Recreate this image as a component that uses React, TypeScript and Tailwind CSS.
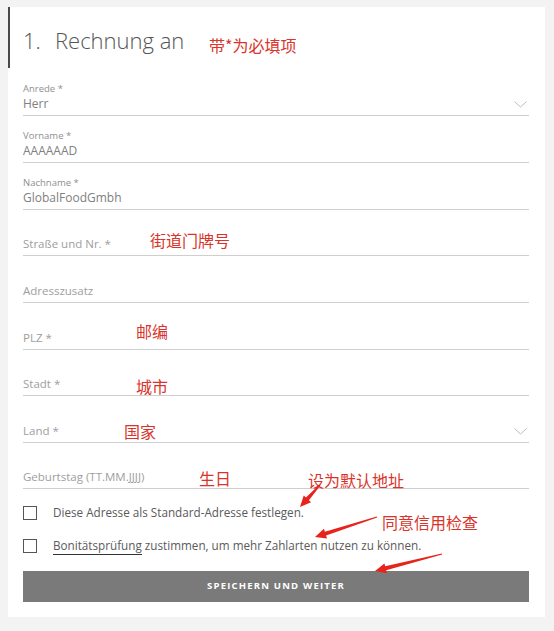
import React from 'react';

const font = { fontFamily: '"Open Sans", "Liberation Sans", sans-serif' };
const cjk = { fontFamily: '"Noto Sans CJK SC", "Noto Sans", sans-serif' };

type FieldProps = {
  label: string;
  value?: string;
  h: string;
  select?: boolean;
};

function Chevron() {
  return (
    <svg width="13" height="7" viewBox="0 0 13 7" className="absolute right-[2px] bottom-[7px]">
      <path d="M0.5 0.5 L6.5 6 L12.5 0.5" fill="none" stroke="#bdbdbd" strokeWidth="1" />
    </svg>
  );
}

function Field({ label, value, h, select }: FieldProps) {
  return (
    <div className={`relative flex flex-col justify-end border-b border-[#cfcfcf] pb-[4px] ${h}`}>
      {value ? (
        <>
          <div className="text-[9.5px] leading-[12px] text-[#8f8f8f] mb-[2px]">{label}</div>
          <div className="text-[12px] leading-[14px] text-[#808080]">{value}</div>
        </>
      ) : (
        <div className="text-[11.5px] leading-[14px] text-[#9e9e9e]">{label}</div>
      )}
      {select && <Chevron />}
    </div>
  );
}

function Note({ text, className }: { text: string; className: string }) {
  return (
    <div className={`absolute text-[#d9342b] text-[16px] leading-[20px] whitespace-nowrap ${className}`} style={cjk}>
      {text}
    </div>
  );
}

function Arrow({ x1, y1, x2, y2 }: { x1: number; y1: number; x2: number; y2: number }) {
  const dx = x2 - x1;
  const dy = y2 - y1;
  const len = Math.sqrt(dx * dx + dy * dy);
  const ux = dx / len;
  const uy = dy / len;
  const px = -uy;
  const py = ux;
  const hl = 11;
  const hw = 5;
  const bx = x2 - ux * hl;
  const by = y2 - uy * hl;
  const tail = `${x1 + px * 0.6},${y1 + py * 0.6} ${x1 - px * 0.6},${y1 - py * 0.6}`;
  const pts = `${tail} ${bx - px * 2},${by - py * 2} ${bx - px * hw},${by - py * hw} ${x2},${y2} ${bx + px * hw},${by + py * hw} ${bx + px * 2},${by + py * 2}`;
  return <polygon points={pts} fill="#e8231b" />;
}

export default function App() {
  return (
    <div className="w-[554px] h-[631px] bg-[#f3f3f3] pt-[7px] pl-[8px]" style={font}>
      <div className="relative w-[537px] h-[610px] bg-white pl-[15px] pr-[16px]">
        <div className="absolute left-0 top-0 w-[2px] h-[61px] bg-[#4a4a4a]" />
        <div className="h-[62px] flex items-center pt-[4px] text-[#555] font-light text-[22px]">
          <span className="w-[32px]">1.</span>
          <span>Rechnung an</span>
        </div>

        <Field label="Anrede *" value="Herr" h="h-[47px]" select />
        <Field label="Vorname *" value="AAAAAAD" h="h-[47px]" />
        <Field label="Nachname *" value="GlobalFoodGmbh" h="h-[47px]" />
        <Field label="Straße und Nr. *" h="h-[46px]" />
        <Field label="Adresszusatz" h="h-[47px]" />
        <Field label="PLZ *" h="h-[47px]" />
        <Field label="Stadt *" h="h-[46px]" />
        <Field label="Land *" h="h-[47px]" select />
        <Field label="Geburtstag (TT.MM.JJJJ)" h="h-[46px]" />

        <div className="flex flex-col gap-[19px] pt-[17px] text-[11.7px] text-[#5a5a5a]">
          <label className="flex items-center h-[14px]">
            <span className="w-[14px] h-[14px] border-[1.5px] border-[#555] mr-[16px]" />
            <span>Diese Adresse als Standard-Adresse festlegen.</span>
          </label>
          <label className="flex items-center h-[14px]">
            <span className="w-[14px] h-[14px] border-[1.5px] border-[#555] mr-[16px]" />
            <span>
              <span className="border-b border-[#333] pb-[1px]">Bonitätsprüfung</span> zustimmen, um mehr Zahlarten nutzen zu können.
            </span>
          </label>
        </div>

        <button className="mt-[18px] w-full h-[31px] bg-[#7a7a7a] text-white text-[9.5px] font-bold tracking-[1.2px]">
          SPEICHERN UND WEITER
        </button>

        <Note text="带*为必填项" className="left-[201px] top-[28px]" />
        <Note text="街道门牌号" className="left-[142px] top-[223px]" />
        <Note text="邮编" className="left-[128px] top-[314px]" />
        <Note text="城市" className="left-[128px] top-[369px]" />
        <Note text="国家" className="left-[116px] top-[414px]" />
        <Note text="生日" className="left-[191px] top-[461px]" />
        <Note text="设为默认地址" className="left-[300px] top-[463px]" />
        <Note text="同意信用检查" className="left-[374px] top-[505px]" />

        <svg className="absolute left-0 top-0 pointer-events-none" width="537" height="610">
          <Arrow x1={312} y1={478} x2={292} y2={500} />
          <Arrow x1={369} y1={510} x2={307} y2={530} />
          <Arrow x1={434} y1={547} x2={367} y2={564} />
        </svg>
      </div>
    </div>
  );
}
